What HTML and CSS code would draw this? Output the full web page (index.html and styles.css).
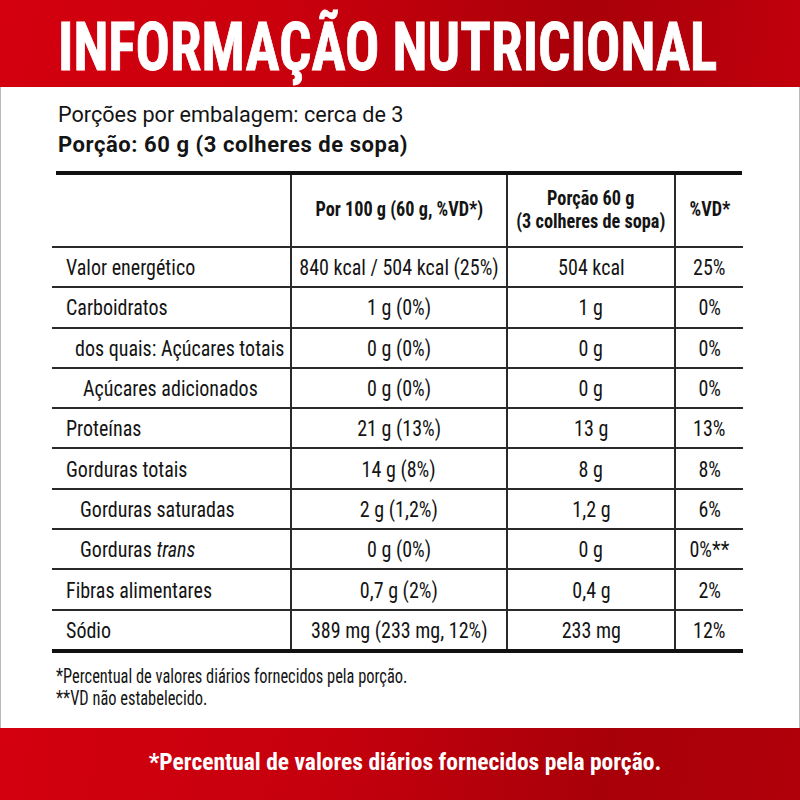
FILE: index.html
```html
<!DOCTYPE html>
<html lang="pt-BR">
<head>
<meta charset="utf-8">
<title>Informação Nutricional</title>
<link rel="stylesheet" href="styles.css">
</head>
<body>
<div class="page">
  <header class="top">
    <h1 class="title"><span class="squeeze">INFORMAÇÃO NUTRICIONAL</span></h1>
  </header>
  <main class="panel">
    <p class="servings">Porções por embalagem: cerca de 3</p>
    <p class="portion">Porção: 60 g (3 colheres de sopa)</p>
    <div class="nt">
      <div class="row head">
        <div class="cell"></div>
        <div class="cell c"><span class="t">Por 100 g (60 g, %VD*)</span></div>
        <div class="cell c"><span class="t">Porção 60 g<br>(3 colheres de sopa)</span></div>
        <div class="cell c"><span class="t">%VD*</span></div>
      </div>
      <div class="row">
        <div class="cell l l0"><span class="t">Valor energético</span></div>
        <div class="cell c"><span class="t">840 kcal / 504 kcal (25%)</span></div>
        <div class="cell c"><span class="t">504 kcal</span></div>
        <div class="cell c"><span class="t">25%</span></div>
      </div>
      <div class="row">
        <div class="cell l l0"><span class="t">Carboidratos</span></div>
        <div class="cell c"><span class="t">1 g (0%)</span></div>
        <div class="cell c"><span class="t">1 g</span></div>
        <div class="cell c"><span class="t">0%</span></div>
      </div>
      <div class="row">
        <div class="cell l l1"><span class="t">dos quais: Açúcares totais</span></div>
        <div class="cell c"><span class="t">0 g (0%)</span></div>
        <div class="cell c"><span class="t">0 g</span></div>
        <div class="cell c"><span class="t">0%</span></div>
      </div>
      <div class="row">
        <div class="cell l l3"><span class="t">Açúcares adicionados</span></div>
        <div class="cell c"><span class="t">0 g (0%)</span></div>
        <div class="cell c"><span class="t">0 g</span></div>
        <div class="cell c"><span class="t">0%</span></div>
      </div>
      <div class="row">
        <div class="cell l l0"><span class="t">Proteínas</span></div>
        <div class="cell c"><span class="t">21 g (13%)</span></div>
        <div class="cell c"><span class="t">13 g</span></div>
        <div class="cell c"><span class="t">13%</span></div>
      </div>
      <div class="row">
        <div class="cell l l0"><span class="t">Gorduras totais</span></div>
        <div class="cell c"><span class="t">14 g (8%)</span></div>
        <div class="cell c"><span class="t">8 g</span></div>
        <div class="cell c"><span class="t">8%</span></div>
      </div>
      <div class="row">
        <div class="cell l l2"><span class="t">Gorduras saturadas</span></div>
        <div class="cell c"><span class="t">2 g (1,2%)</span></div>
        <div class="cell c"><span class="t">1,2 g</span></div>
        <div class="cell c"><span class="t">6%</span></div>
      </div>
      <div class="row">
        <div class="cell l l2"><span class="t">Gorduras <em>trans</em></span></div>
        <div class="cell c"><span class="t">0 g (0%)</span></div>
        <div class="cell c"><span class="t">0 g</span></div>
        <div class="cell c"><span class="t">0%**</span></div>
      </div>
      <div class="row">
        <div class="cell l l0"><span class="t">Fibras alimentares</span></div>
        <div class="cell c"><span class="t">0,7 g (2%)</span></div>
        <div class="cell c"><span class="t">0,4 g</span></div>
        <div class="cell c"><span class="t">2%</span></div>
      </div>
      <div class="row last">
        <div class="cell l l0"><span class="t">Sódio</span></div>
        <div class="cell c"><span class="t">389 mg (233 mg, 12%)</span></div>
        <div class="cell c"><span class="t">233 mg</span></div>
        <div class="cell c"><span class="t">12%</span></div>
      </div>
    </div>
    <p class="note"><span class="tn">*Percentual de valores diários fornecidos pela porção.</span></p>
    <p class="note"><span class="tn">**VD não estabelecido.</span></p>
  </main>
  <footer class="bottom">
    <span>*Percentual de valores diários fornecidos pela porção.</span>
  </footer>
</div>
</body>
</html>
```

FILE: styles.css
```css
html, body {
  margin: 0;
  padding: 0;
  background: #ffffff;
}

body {
  font-family: "Roboto Condensed", "Liberation Sans Narrow", "DejaVu Sans Condensed", "Liberation Sans", sans-serif;
  color: #141414;
}

.page {
  width: 800px;
  height: 800px;
  display: flex;
  flex-direction: column;
  overflow: hidden;
}

.top {
  height: 87px;
  box-sizing: border-box;
  padding: 15px 0 0 58px;
  background: linear-gradient(100deg, #d4000f 0%, #ca000d 35%, #a90009 72%, #b5000b 88%, #c2000c 100%);
}

.title {
  margin: 0;
  font-size: 66px;
  line-height: 66px;
  font-weight: 700;
  color: #ffffff;
  white-space: nowrap;
  -webkit-text-stroke: 0.8px #ffffff;
}

.squeeze {
  display: inline-block;
  transform: scaleX(0.865);
  transform-origin: left center;
}

.panel {
  height: 641px;
  box-sizing: border-box;
  padding: 13px 0 0 57px;
  border-left: 1px solid #b9b9b9;
  border-right: 1px solid #b9b9b9;
}

.servings,
.portion {
  margin: 0;
  font-family: Roboto, "Liberation Sans", sans-serif;
  font-size: 21.6px;
  line-height: 30px;
  white-space: nowrap;
}

.portion {
  font-weight: 700;
  font-size: 22px;
  letter-spacing: 0.55px;
}

.nt {
  width: 691px;
  margin: 11px 0 0 -6px;
  font-size: 22.5px;
}

.nt::before {
  content: "";
  display: block;
  height: 4px;
  margin: 0 1px 0 4px;
  background: #111111;
}

.row {
  display: grid;
  grid-template-columns: 238px 216px 168px 1fr;
  height: 40.3px;
  box-sizing: border-box;
  border-bottom: 2px solid #2a2a2a;
}

.row.head {
  height: 73px;
  font-weight: 700;
  font-size: 20.5px;
  line-height: 23px;
}

.row.last {
  height: 42.3px;
  border-bottom: 4px solid #111111;
}

.cell {
  display: flex;
  align-items: center;
  white-space: nowrap;
}

.cell + .cell {
  border-left: 2px solid #2a2a2a;
}

.cell.c {
  justify-content: center;
  text-align: center;
}

.t {
  display: inline-block;
  transform: scaleX(0.89);
  transform-origin: center center;
}

.cell.l .t {
  transform-origin: left center;
}

.head .cell.c {
  padding-bottom: 2px;
}

.l0 { padding-left: 14px; }
.l1 { padding-left: 23px; }
.l2 { padding-left: 28px; }
.l3 { padding-left: 31px; }

.note {
  margin: 12px 0 0 -2px;
  font-size: 20px;
  line-height: 22px;
  white-space: nowrap;
}

.note + .note {
  margin-top: 0;
}

.tn {
  display: inline-block;
  transform: scaleX(0.82);
  transform-origin: left center;
}

.bottom {
  height: 72px;
  display: flex;
  align-items: center;
  justify-content: center;
  padding: 0 0 4px 10px;
  box-sizing: border-box;
  background: linear-gradient(100deg, #d4000f 0%, #c6000d 40%, #a80009 75%, #b0000a 100%);
  color: #ffffff;
  font-size: 23.5px;
  font-weight: 700;
  white-space: nowrap;
}
```
